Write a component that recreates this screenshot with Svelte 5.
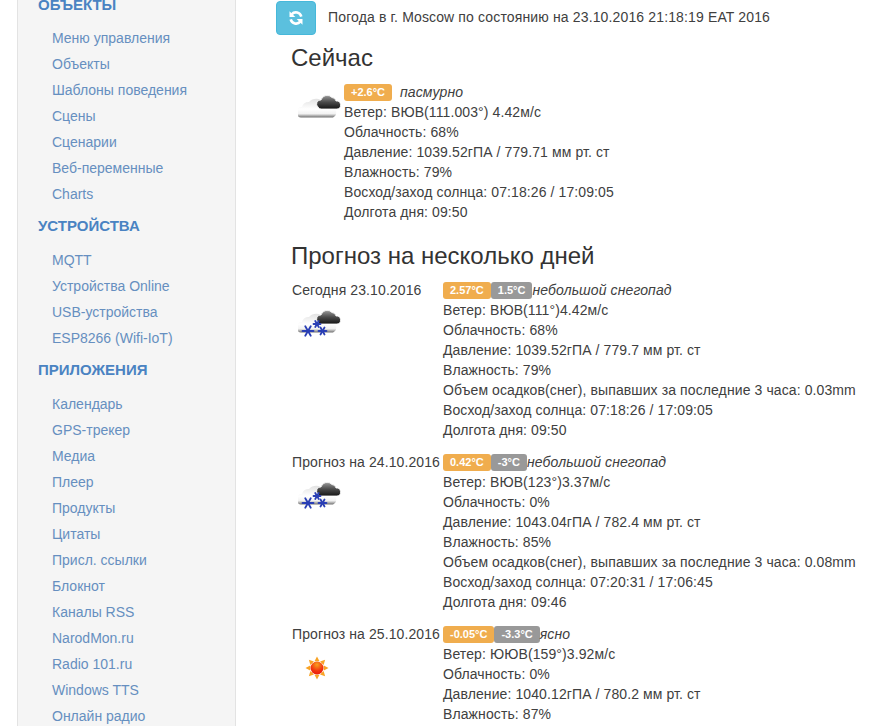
<script>
	const groups = [
		{ title: "Объекты", items: ["Меню управления", "Объекты", "Шаблоны поведения", "Сцены", "Сценарии", "Веб-переменные", "Charts"] },
		{ title: "Устройства", items: ["MQTT", "Устройства Online", "USB-устройства", "ESP8266 (Wifi-IoT)"] },
		{ title: "Приложения", items: ["Календарь", "GPS-трекер", "Медиа", "Плеер", "Продукты", "Цитаты", "Присл. ссылки", "Блокнот", "Каналы RSS", "NarodMon.ru", "Radio 101.ru", "Windows TTS", "Онлайн радио"] }
	];

	const days = [
		{
			date: "Сегодня 23.10.2016", hi: "2.57°C", lo: "1.5°C", sky: "небольшой снегопад", icon: "snow",
			lines: ["Ветер: ВЮВ(111°)4.42м/с", "Облачность: 68%", "Давление: 1039.52гПА / 779.7 мм рт. ст", "Влажность: 79%", "Объем осадков(снег), выпавших за последние 3 часа: 0.03mm", "Восход/заход солнца: 07:18:26 / 17:09:05", "Долгота дня: 09:50"]
		},
		{
			date: "Прогноз на 24.10.2016", hi: "0.42°C", lo: "-3°C", sky: "небольшой снегопад", icon: "snow",
			lines: ["Ветер: ВЮВ(123°)3.37м/с", "Облачность: 0%", "Давление: 1043.04гПА / 782.4 мм рт. ст", "Влажность: 85%", "Объем осадков(снег), выпавших за последние 3 часа: 0.08mm", "Восход/заход солнца: 07:20:31 / 17:06:45", "Долгота дня: 09:46"]
		},
		{
			date: "Прогноз на 25.10.2016", hi: "-0.05°C", lo: "-3.3°C", sky: "ясно", icon: "sun",
			lines: ["Ветер: ЮЮВ(159°)3.92м/с", "Облачность: 0%", "Давление: 1040.12гПА / 780.2 мм рт. ст", "Влажность: 87%"]
		}
	];

	const now = ["Ветер: ВЮВ(111.003°) 4.42м/с", "Облачность: 68%", "Давление: 1039.52гПА / 779.71 мм рт. ст", "Влажность: 79%", "Восход/заход солнца: 07:18:26 / 17:09:05", "Долгота дня: 09:50"];
</script>

{#snippet flake(x, y, r)}
	<g stroke="#2a3fb5" stroke-width="1.8" stroke-linecap="round">
		<line x1={x - r} y1={y} x2={x + r} y2={y} />
		<line x1={x - r * 0.5} y1={y - r * 0.87} x2={x + r * 0.5} y2={y + r * 0.87} />
		<line x1={x + r * 0.5} y1={y - r * 0.87} x2={x - r * 0.5} y2={y + r * 0.87} />
	</g>
{/snippet}

{#snippet weatherIcon(kind)}
	<svg class="wicon" viewBox="0 0 44 36" width="44" height="36" aria-hidden="true">
		<defs>
			<linearGradient id="white-{kind}" x1="0" y1="0" x2="0" y2="1">
				<stop offset="0" stop-color="#e2e2e2" />
				<stop offset="0.55" stop-color="#ffffff" />
				<stop offset="0.8" stop-color="#f2f2f2" />
				<stop offset="1" stop-color="#6f6f6f" />
			</linearGradient>
			<linearGradient id="dark-{kind}" x1="0" y1="0" x2="0" y2="1">
				<stop offset="0" stop-color="#9a9a9a" />
				<stop offset="0.5" stop-color="#4a4a4a" />
				<stop offset="1" stop-color="#151515" />
			</linearGradient>
			<radialGradient id="disc-{kind}" cx="0.5" cy="0.25" r="0.8">
				<stop offset="0" stop-color="#f9a01e" />
				<stop offset="0.6" stop-color="#f2330f" />
				<stop offset="1" stop-color="#e8170a" />
			</radialGradient>
		</defs>
		{#if kind === "sun"}
			<g fill="#f8a325">
				{#each [0, 45, 90, 135, 180, 225, 270, 315] as a}
					<path d="M16.500 11.200L19 6.500l2.500 4.700z" transform="rotate({a} 19 18)" />
				{/each}
			</g>
			<circle cx="19" cy="18" r="6.500" fill="url(#disc-{kind})" />
		{:else}
			<path d="M3 26.500a5 5 0 0 1 1-10.500a7 7 0 0 1 7-5a10 10 0 0 1 15 0.500a6 6 0 0 1 7 4.500a5.500 5.500 0 0 1 2 10.500z" fill="url(#white-{kind})" />
			<path d="M20 16a4 4 0 0 1 3-7a6.500 6.500 0 0 1 11-2.500a4.500 4.500 0 0 1 4 3.500a4 4 0 0 1 1 8h-16a4 4 0 0 1-3-2z" fill="url(#dark-{kind})" stroke="#fff" stroke-width="0.8" />
			{#if kind === "snow"}
				{@render flake(10, 25, 5.500)}
				{@render flake(19, 18, 3.500)}
				{@render flake(24.500, 25, 4)}
			{/if}
		{/if}
	</svg>
{/snippet}

<div class="page">
	<aside class="sidebar">
		{#each groups as group}
			<h4>{group.title}</h4>
			<ul>
				{#each group.items as item}
					<li>{item}</li>
				{/each}
			</ul>
		{/each}
	</aside>

	<main>
		<div class="top">
			<button class="refresh" aria-label="Обновить">
				<svg viewBox="0 0 16 16" width="16" height="16" aria-hidden="true">
					<path d="M13.300 6.600A5.600 5.600 0 0 0 3.700 4.300" fill="none" stroke="#fff" stroke-width="2.600" />
					<path d="M1.500 1.200v5.800h5.800z" fill="#fff" />
					<path d="M2.700 9.400a5.600 5.600 0 0 0 9.600 2.300" fill="none" stroke="#fff" stroke-width="2.600" />
					<path d="M14.500 14.800V9h-5.800z" fill="#fff" />
				</svg>
			</button>
			<span>Погода в г. Moscow по состоянию на 23.10.2016 21:18:19 EAT 2016</span>
		</div>

		<section class="block">
			<h3>Сейчас</h3>
			<div class="now">
				{@render weatherIcon("cloud")}
				<div class="info">
					<div class="head"><span class="label hi now-hi">+2.6°C</span><em>пасмурно</em></div>
					{#each now as line}
						<div>{line}</div>
					{/each}
				</div>
			</div>
		</section>

		<section class="block forecast">
			<h3>Прогноз на несколько дней</h3>
			<div class="days">
				{#each days as day}
					<div class="when">
						<div>{day.date}</div>
						{@render weatherIcon(day.icon)}
					</div>
					<div class="info">
						<div class="head"><span class="label hi">{day.hi}</span><span class="label lo">{day.lo}</span><em>{day.sky}</em></div>
						{#each day.lines as line}
							<div>{line}</div>
						{/each}
					</div>
				{/each}
			</div>
		</section>
	</main>
</div>

<style>
	:global(body) {
		background: #fff;
		overflow: hidden;
	}

	.page {
		display: flex;
		align-items: flex-start;
		height: 726px;
		overflow: hidden;
		font-family: "Liberation Sans", Arial, sans-serif;
		font-size: 14px;
		line-height: 20px;
		color: #404040;
	}

	.sidebar {
		box-sizing: border-box;
		flex: none;
		width: 219px;
		margin: -5px 0 0 17px;
		padding: 0 20px;
		background: #f5f5f5;
		border: 1px solid #e3e3e3;
		border-width: 0 1px;
	}

	h4 {
		margin: 0;
		font-size: 15px;
		line-height: 20px;
		font-weight: bold;
		text-transform: uppercase;
		color: #4a83c2;
	}

	ul {
		list-style: none;
		margin: 11px 0 9px;
		padding: 0;
	}

	h4:first-child + ul {
		margin-top: 10px;
	}

	li {
		padding: 3px 14px;
		color: #668fc0;
	}

	main {
		flex: none;
		width: 616px;
		margin-left: 40px;
		letter-spacing: 0.1px;
	}

	.top {
		display: flex;
		align-items: center;
		gap: 12px;
		margin-top: 1px;
	}

	.top span {
		padding-bottom: 2px;
		letter-spacing: 0.14px;
	}

	.refresh {
		display: flex;
		align-items: center;
		justify-content: center;
		width: 40px;
		height: 34px;
		padding: 0;
		border: 1px solid #46b8da;
		border-radius: 4px;
		background: #5bc0de;
	}

	.block {
		padding-left: 15px;
	}

	h3 {
		margin: 10px 0 11px;
		font-size: 24px;
		line-height: 26px;
		font-weight: 500;
		letter-spacing: 0;
		color: #333;
	}

	.now {
		display: flex;
		padding-left: 7px;
		align-items: flex-start;
	}

	.now .wicon {
		margin: 9px 2px 0 0;
	}

	.head {
		display: flex;
		align-items: center;
		height: 20px;
	}

	em {
		font-style: italic;
	}

	.label {
		display: inline-block;
		padding: 2px 7px;
		border-radius: 3px;
		font-size: 11px;
		font-weight: bold;
		line-height: 13px;
		letter-spacing: 0;
		color: #fff;
	}

	.hi {
		background: #f0ad4e;
	}

	.lo {
		background: #999;
	}

	.now-hi {
		margin-right: 8px;
	}

	.forecast {
		margin-top: 21px;
	}

	.days {
		display: grid;
		grid-template-columns: max-content 1fr;
		column-gap: 3px;
		row-gap: 12px;
		padding-left: 1px;
	}

	.when .wicon {
		display: block;
		margin: 6px 0 0 6px;
	}
</style>
